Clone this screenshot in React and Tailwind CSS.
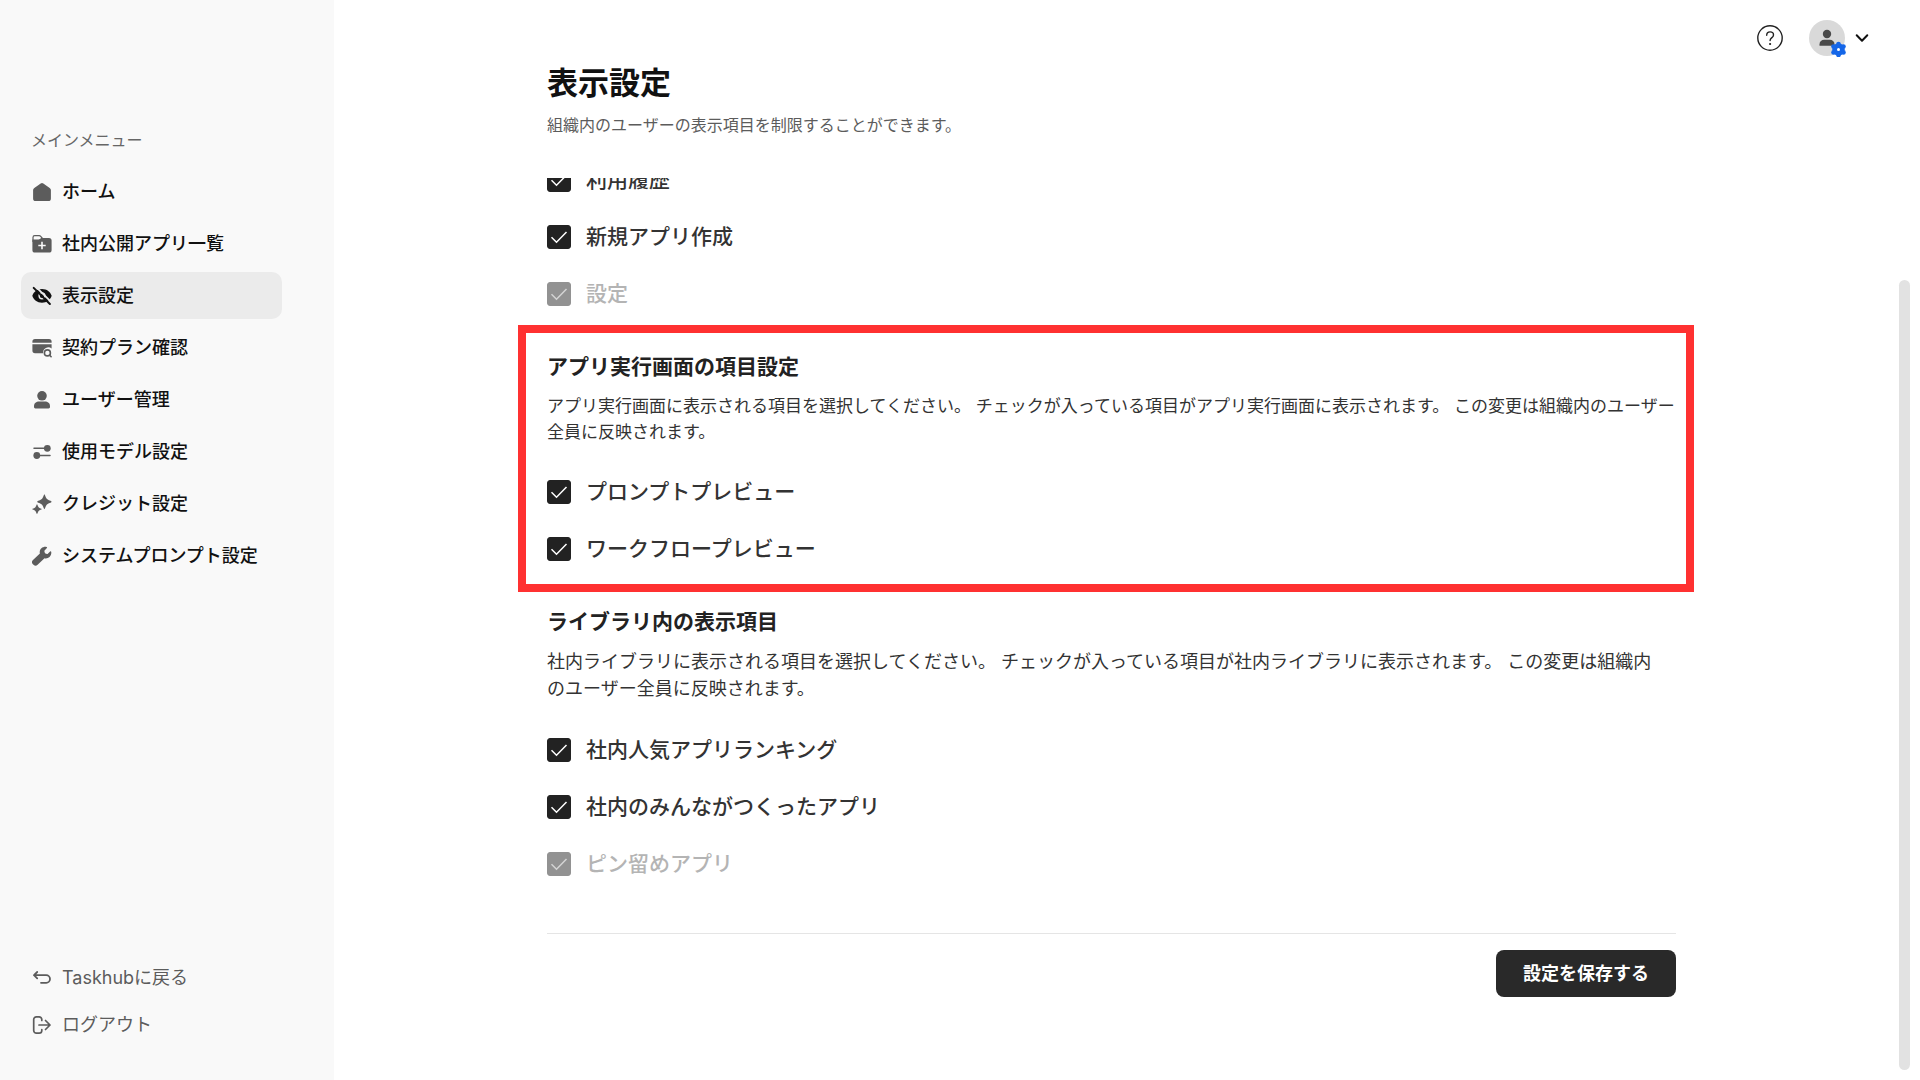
function HomeIcon() {
  return (
    <svg viewBox="0 0 20 20" className="size-5" fill="currentColor" aria-hidden="true">
      <path d="M8.700 1.400a2.200 2.200 0 0 1 2.600 0l6.400 4.500c.8.5 1.200 1.300 1.200 2.200v8.400a2.600 2.600 0 0 1-2.600 2.600H3.700a2.600 2.600 0 0 1-2.600-2.600V8.100c0-.9.4-1.700 1.200-2.200z" />
    </svg>
  );
}

function FolderPlusIcon() {
  return (
    <svg viewBox="0 0 20 20" className="size-5" aria-hidden="true">
      <path d="M1 8V3.400A1.700 1.700 0 0 1 2.700 1.700h4.600c.6 0 1 .2 1.400.6L10.500 4.500" fill="none" stroke="currentColor" strokeWidth="1.200" />
      <path
        fill="currentColor"
        fillRule="evenodd"
        d="M.4 5.400h6.200c.5 0 .9-.2 1.300-.5l1.300-1h7.800a2.600 2.600 0 0 1 2.600 2.600v9.500a2.600 2.600 0 0 1-2.600 2.600H3A2.600 2.600 0 0 1 .4 16zM9.200 7.800v2.900H6.300v1.600h2.900v2.900h1.600v-2.900h2.900v-1.600h-2.900V7.800z"
      />
    </svg>
  );
}

function HiddenIcon() {
  return (
    <svg viewBox="0 0 20 20" className="size-5" aria-hidden="true">
      <path
        fill="currentColor"
        fillRule="evenodd"
        d="M10 3c4.900 0 8.400 2.900 9.700 6.800-1.300 4-4.800 6.900-9.700 6.900S1.600 13.800.3 9.800C1.600 5.900 5.100 3 10 3zm0 3.200a3.600 3.600 0 1 0 0 7.200 3.600 3.600 0 0 0 0-7.200z"
      />
      <circle cx="10" cy="9.800" r="2.200" fill="currentColor" />
      <path d="M3.700.7 20.300 17" stroke="#ebebeb" strokeWidth="1.800" />
      <path d="M1.700 1.900 17.900 18" stroke="currentColor" strokeWidth="2" strokeLinecap="round" />
    </svg>
  );
}

function PlanIcon() {
  return (
    <svg viewBox="0 0 20 20" className="size-5" fill="currentColor" aria-hidden="true">
      <path d="M3 .9h14a2.600 2.600 0 0 1 2.600 2.600v1.200H.4V3.500A2.600 2.600 0 0 1 3 .9zM.4 6.300h19.200v4.100a5.400 5.400 0 0 0-8.500 4.800H3A2.600 2.600 0 0 1 .4 12.600z" />
      <circle cx="15.400" cy="14.900" r="3" fill="none" stroke="currentColor" strokeWidth="1.600" />
      <path d="M17.500 17l1.600 1.700" stroke="currentColor" strokeWidth="1.600" strokeLinecap="round" />
    </svg>
  );
}

function UserIcon() {
  return (
    <svg viewBox="0 0 20 20" className="size-5" fill="currentColor" aria-hidden="true">
      <circle cx="10" cy="5.800" r="4.800" />
      <path d="M2 16.300c0-3.200 2.400-4.700 5-4.700h6c2.600 0 5 1.500 5 4.700v.7c0 .8-.6 1.400-1.400 1.400H3.400c-.8 0-1.400-.6-1.400-1.400z" />
    </svg>
  );
}

function ModelIcon() {
  return (
    <svg viewBox="0 0 20 20" className="size-5" fill="currentColor" aria-hidden="true">
      <circle cx="15.300" cy="6.300" r="3.400" />
      <circle cx="4.800" cy="13.500" r="3.400" />
      <path d="M2 6.300h11M7 13.500h11" stroke="currentColor" strokeWidth="1.500" strokeLinecap="round" />
    </svg>
  );
}

function SparkleIcon() {
  return (
    <svg viewBox="0 0 20 20" className="size-5" fill="currentColor" aria-hidden="true">
      <path d="M12.400.2c.5 0 .9 2.700 2.300 4.500 1.600 1.700 4.900 2 4.900 3s-3.300 1.300-4.900 3c-1.400 1.800-1.800 4.500-2.300 4.500s-.9-2.700-2.300-4.500c-1.600-1.700-4.900-2-4.900-3s3.300-1.300 4.900-3c1.400-1.800 1.800-4.500 2.300-4.500z" />
      <path d="M5 10.200c.4 0 .7 1.800 1.600 3 1.100 1.200 3.200 1.300 3.200 1.900s-2.100.7-3.200 1.800c-.9 1.200-1.200 3-1.600 3s-.7-1.800-1.600-3c-1.100-1.100-3.200-1.200-3.200-1.800s2.100-.7 3.200-1.900c.9-1.200 1.200-3 1.600-3z" />
    </svg>
  );
}

function WrenchIcon() {
  return (
    <svg viewBox="0 0 20 20" className="size-5" fill="currentColor" aria-hidden="true">
      <path d="M14.600.9c.5.100.7.700.3 1.100l-2.300 2.500c-.2.200-.3.500-.2.800l.4 1.500c.1.400.4.600.7.700l1.500.4c.3.100.6 0 .8-.2l2.300-2.300c.4-.4 1-.2 1.100.3.400 2.100-.3 4.100-1.700 5.400-1.400 1.300-3.300 1.700-5 1.200L5.600 18.700a2.900 2.900 0 0 1-4.100 0l-.6-.5a2.900 2.900 0 0 1 .1-4.100l6.900-6.500c-.5-1.900 0-3.900 1.500-5.300C10.800 1 12.800.5 14.600.9z" />
    </svg>
  );
}

function BackIcon() {
  return (
    <svg viewBox="0 0 20 20" className="size-5" fill="none" stroke="currentColor" strokeWidth="1.800" strokeLinecap="round" strokeLinejoin="round" aria-hidden="true">
      <path d="M5.200 4 2 7.200l3.200 3.200M2 7.200h12.200a3.800 3.800 0 0 1 0 7.600H9" />
    </svg>
  );
}

function LogoutIcon() {
  return (
    <svg viewBox="0 0 20 20" className="size-5" fill="none" stroke="currentColor" strokeWidth="1.700" strokeLinecap="round" strokeLinejoin="round" aria-hidden="true">
      <path d="M9.800 5.400V4.500a2.700 2.700 0 0 0-2.700-2.700H4.400a2.700 2.700 0 0 0-2.700 2.700v11a2.700 2.700 0 0 0 2.700 2.700h2.700a2.700 2.700 0 0 0 2.700-2.700v-.9" />
      <path d="M7 10h11M13.500 5.500 18 10l-4.500 4.500" />
    </svg>
  );
}

const menuItems = [
  { label: "ホーム", icon: <HomeIcon /> },
  { label: "社内公開アプリ一覧", icon: <FolderPlusIcon /> },
  { label: "表示設定", icon: <HiddenIcon />, active: true },
  { label: "契約プラン確認", icon: <PlanIcon /> },
  { label: "ユーザー管理", icon: <UserIcon /> },
  { label: "使用モデル設定", icon: <ModelIcon /> },
  { label: "クレジット設定", icon: <SparkleIcon /> },
  { label: "システムプロンプト設定", icon: <WrenchIcon /> },
];

function Sidebar() {
  return (
    <aside className="flex w-[334px] shrink-0 flex-col bg-[#f9f9f9] pt-32 pb-8 text-lg">
      <p className="px-[31px] text-base leading-6 text-[#666]">メインメニュー</p>
      <nav className="mt-4 flex flex-col gap-[5px] pr-[52px] pl-[21px]">
        {menuItems.map((item) => (
          <a
            key={item.label}
            href="#"
            className={`flex h-[47px] items-center gap-[10px] rounded-[10px] px-[11px] font-medium text-[#111] ${item.active ? "bg-[#ebebeb]" : ""}`}
          >
            <span className={item.active ? "text-[#111]" : "text-[#5c5c5c]"}>{item.icon}</span>
            {item.label}
          </a>
        ))}
      </nav>

      {/* Footer links */}
      <div className="mt-auto flex flex-col pl-8 text-[#5c5c5c]">
        <a href="#" className="flex h-[47px] items-center gap-[10px]">
          <BackIcon />
          Taskhubに戻る
        </a>
        <a href="#" className="flex h-[47px] items-center gap-[10px]">
          <LogoutIcon />
          ログアウト
        </a>
      </div>
    </aside>
  );
}

function Header() {
  return (
    <header className="flex items-center justify-end pt-[19px] pr-[50px]">
      <button type="button" aria-label="ヘルプ" className="text-[#222]">
        <svg viewBox="0 0 26 26" className="size-[26px]" fill="none" stroke="currentColor" strokeWidth="1.400" strokeLinecap="round">
          <circle cx="13" cy="13" r="12.200" />
          <path d="M9.700 10.200c0-2 1.400-3.300 3.400-3.300s3.400 1.200 3.400 3c0 1.500-.9 2.200-1.900 3-.9.700-1.500 1.300-1.500 2.600" />
          <circle cx="13.100" cy="19" r="1.100" fill="currentColor" stroke="none" />
        </svg>
      </button>
      <button type="button" aria-label="アカウント" className="ml-[25px] flex items-center gap-2">
        <svg viewBox="0 0 38 38" className="size-[38px]">
          <circle cx="19" cy="19" r="18" fill="#d9d9d9" />
          <circle cx="19" cy="15" r="4.200" fill="#4a4a4a" />
          <path d="M11.500 26.700v-1.500c0-2.800 2.200-4.400 4.700-4.400h5.600c2.500 0 4.700 1.600 4.700 4.400v1.500z" fill="#4a4a4a" />
          <g fill="#1566e8" transform="translate(30.500 30.500)">
            <circle r="6.200" />
            <circle cx="0" cy="-5.500" r="2.300" />
            <circle cx="0" cy="5.500" r="2.300" />
            <circle cx="5" cy="-2.900" r="2.300" />
            <circle cx="5" cy="2.900" r="2.300" />
            <circle cx="-5" cy="-2.900" r="2.300" />
            <circle cx="-5" cy="2.900" r="2.300" />
            <circle r="1.500" fill="#fff" />
          </g>
        </svg>
        <svg viewBox="0 0 16 16" className="size-4" fill="none" stroke="#111" strokeWidth="2" strokeLinecap="round" strokeLinejoin="round">
          <path d="M2.700 5.300 8 10.700l5.300-5.400" />
        </svg>
      </button>
    </header>
  );
}

function CheckRow({ label, disabled }) {
  return (
    <label className={`flex h-6 items-center gap-[15px] text-[21px] font-medium ${disabled ? "text-[#b4b4b4]" : "text-[#333]"}`}>
      <span className="grid">
        <input
          type="checkbox"
          defaultChecked
          disabled={disabled}
          className="peer col-start-1 row-start-1 size-6 appearance-none rounded-[3px] border border-[#222] checked:bg-[#222] disabled:border-[#929292] disabled:checked:bg-[#929292]"
        />
        <svg
          viewBox="0 0 24 24"
          className="pointer-events-none invisible col-start-1 row-start-1 size-6 text-white peer-checked:visible peer-disabled:text-[#d4d4d4]"
          fill="none"
          stroke="currentColor"
          strokeWidth="1.500"
          aria-hidden="true"
        >
          <path d="M4.500 12.300 9.500 17.300 19.500 7" />
        </svg>
      </span>
      {label}
    </label>
  );
}

function SectionTitle({ children }) {
  return <h2 className="text-[21px] leading-7 font-bold text-[#222]">{children}</h2>;
}

export default function App() {
  return (
    <div className="flex h-screen min-h-[1060px] bg-white font-['Inter','Noto_Sans_CJK_JP',sans-serif]" lang="ja">
      <Sidebar />

      <main className="flex min-w-0 flex-1 flex-col">
        <Header />

        <div className="flex min-h-0 flex-1 pr-[10px]">
          <div className="flex min-w-0 flex-1 flex-col items-center pr-[10px]">
            <div className="flex min-h-0 w-full max-w-[1129px] flex-1 flex-col">
              <h1 className="mt-2 text-[31px] leading-9 font-bold text-[#111]">表示設定</h1>
              <p className="mt-3 text-base leading-6 text-[#5c5c5c]">
                組織内のユーザーの表示項目を制限することができます。
              </p>

              {/* Scrolled list */}
              <div className="-mx-[29px] mt-[41px] min-h-0 flex-1 overflow-hidden px-[29px]">
                <div className="-mt-[10px] flex flex-col gap-[33px]">
                  <CheckRow label="利用履歴" />
                  <CheckRow label="新規アプリ作成" />
                  <CheckRow label="設定" disabled />
                </div>

                <section className="-mr-[18px] -ml-[29px] mt-[19px] border-8 border-[#ff3131] pt-5 pr-[7px] pb-[23px] pl-[21px]">
                  <SectionTitle>アプリ実行画面の項目設定</SectionTitle>
                  <p className="mt-3 text-[17px] leading-[26px] text-[#333]">
                    アプリ実行画面に表示される項目を選択してください。 チェックが入っている項目がアプリ実行画面に表示されます。
                    この変更は組織内のユーザー全員に反映されます。
                  </p>
                  <div className="mt-[35px] flex flex-col gap-[33px]">
                    <CheckRow label="プロンプトプレビュー" />
                    <CheckRow label="ワークフロープレビュー" />
                  </div>
                </section>

                <section className="mt-4">
                  <SectionTitle>ライブラリ内の表示項目</SectionTitle>
                  <p className="mt-3 text-lg leading-[27px] text-[#333]">
                    社内ライブラリに表示される項目を選択してください。 チェックが入っている項目が社内ライブラリに表示されます。
                    この変更は組織内
                    <br />
                    のユーザー全員に反映されます。
                  </p>
                  <div className="mt-9 flex flex-col gap-[33px]">
                    <CheckRow label="社内人気アプリランキング" />
                    <CheckRow label="社内のみんながつくったアプリ" />
                    <CheckRow label="ピン留めアプリ" disabled />
                  </div>
                </section>

                <div className="mt-[57px] flex justify-end border-t border-[#e5e5e5] pt-4">
                  <button type="button" className="h-[47px] rounded-lg bg-[#292929] px-[27px] text-lg font-bold text-white">
                    設定を保存する
                  </button>
                </div>
              </div>
            </div>
          </div>

          {/* Scrollbar */}
          <div className="flex w-[11px] flex-col pt-[223px] pb-[10px]">
            <div className="flex-1 rounded-full bg-[#e2e2e2]" />
          </div>
        </div>
      </main>
    </div>
  );
}
